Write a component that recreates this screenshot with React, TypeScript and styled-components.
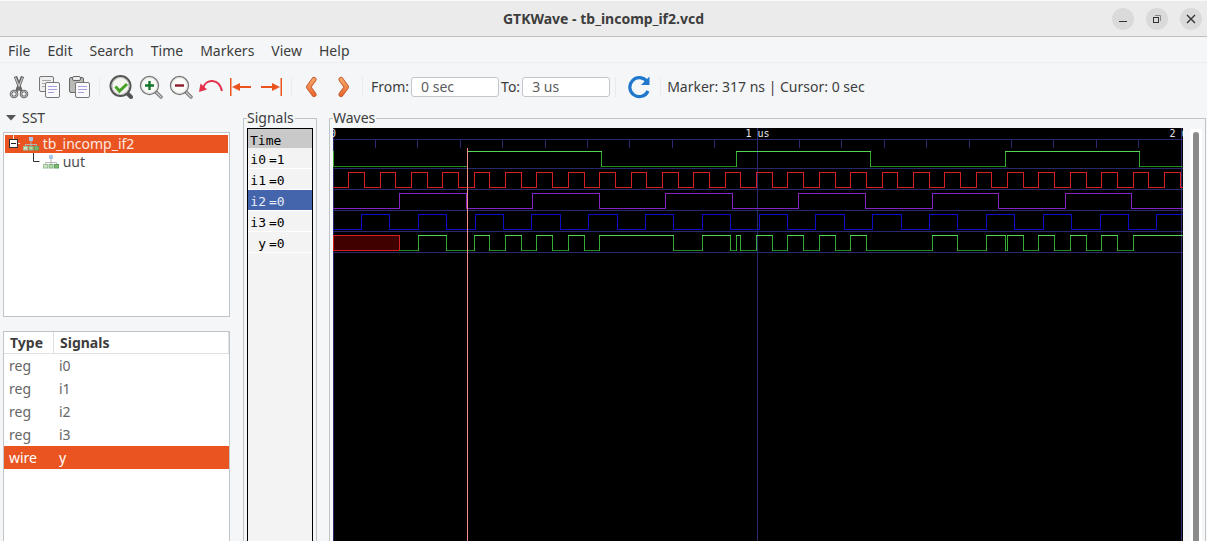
import React from 'react';
import styled, { createGlobalStyle } from 'styled-components';

const Global = createGlobalStyle`
  *, *::before, *::after { box-sizing: border-box; }
  body { margin: 0; background: #f4f6f8; color: #3d3d3d; font: 14px/20px "Noto Sans", sans-serif; }
  button, input { font: inherit; color: inherit; }
`;

const Window = styled.div`
  display: flex;
  flex-direction: column;
  height: 100vh;
  overflow: hidden;
`;

const TitleBar = styled.header`
  display: grid;
  grid-template-columns: 1fr auto 1fr;
  align-items: center;
  height: 37px;
  padding: 0 5px;
  background: #ebebeb;
  border-top: 1px solid #fafafa;
  border-bottom: 1px solid #bdbfc1;
`;

const Title = styled.h1`
  grid-column: 2;
  margin: 0;
  font-size: 14px;
  font-weight: 700;
`;

const WindowButtons = styled.div`
  display: flex;
  justify-content: flex-end;
  gap: 12px;
`;

const RoundButton = styled.button`
  display: flex;
  width: 22px;
  height: 22px;
  padding: 0;
  border: 0;
  border-radius: 50%;
  background: #dadada;
`;

const MenuBar = styled.nav`
  display: flex;
  gap: 1px;
  height: 26px;
  border-bottom: 1px solid #ecedef;
`;

const MenuItem = styled.button`
  padding: 2px 8px 0;
  border: 0;
  background: none;
  line-height: 24px;
`;

const ToolBar = styled.div`
  display: flex;
  align-items: center;
  flex: none;
  height: 45px;
  padding: 3px 4px 0;
`;

const ToolButton = styled.button<{ $width?: number }>`
  display: flex;
  justify-content: center;
  width: ${(p) => p.$width ?? 30}px;
  padding: 0;
  border: 0;
  background: none;
`;

const EdgeButtons = styled.div`
  display: flex;
  gap: 7px;
`;

const Divider = styled.span`
  width: 1px;
  height: 20px;
  margin: 0 6px 0 5px;
  background: #e9ebed;
`;

const Field = styled.label`
  display: flex;
  align-items: center;
  gap: 2px;
  margin-left: 2px;
`;

const TimeInput = styled.input`
  width: 88px;
  height: 20px;
  padding: 0 9px;
  border: 1px solid #c3c7cb;
  border-radius: 3px;
  background: #fff;
  color: #5c5c5c;
`;

const Status = styled.output`
  white-space: pre;
`;

const Main = styled.main`
  display: flex;
  flex: 1;
  min-height: 0;
  padding: 0 1px 0 3px;
`;

const Sidebar = styled.section`
  display: flex;
  flex-direction: column;
  width: 227px;
  margin-right: 13px;
`;

const SstHeader = styled.button`
  display: flex;
  align-items: center;
  gap: 6px;
  padding: 0 0 0 3px;
  margin-bottom: 4px;
  border: 0;
  background: none;
`;

const TreeBox = styled.div`
  height: 185px;
  margin-bottom: 14px;
  padding: 2px 1px;
  border: 1px solid #bfc4c9;
  background: #fff;
`;

const TreeRow = styled.div<{ $selected?: boolean }>`
  display: flex;
  align-items: center;
  height: 18px;
  line-height: 18px;
  color: ${(p) => (p.$selected ? '#fbe9e0' : '#4d4d4d')};
  background: ${(p) => (p.$selected ? '#e95420' : 'none')};
`;

const ListBox = styled.div`
  flex: 1;
  border: 1px solid #bfc4c9;
  border-bottom: 0;
  background: #fff;
`;

const Table = styled.table`
  width: 100%;
  border-collapse: separate;
  border-spacing: 0;
  table-layout: fixed;
`;

const HeadCell = styled.th`
  height: 22px;
  padding: 0 6px;
  border-right: 1px solid #dfe1e2;
  border-bottom: 1px solid #dfe1e2;
  text-align: left;
  line-height: 20px;
  &:first-child { width: 50px; }
`;

const BodyRow = styled.tr<{ $selected?: boolean }>`
  color: ${(p) => (p.$selected ? '#fff' : '#666')};
  background: ${(p) => (p.$selected ? '#e95420' : '#fff')};
`;

const Cell = styled.td`
  height: 23px;
  padding: 0 5px;
`;

const Frame = styled.fieldset<{ $grow?: boolean }>`
  display: flex;
  flex: ${(p) => (p.$grow ? '1' : '0 0 74px')};
  min-width: 0;
  margin: 0 ${(p) => (p.$grow ? 0 : 12)}px 0 0;
  padding: 0 3px;
  border: 1px solid #bfc4c9;
  border-bottom: 0;
`;

const Legend = styled.legend`
  padding: 0 1px 0 0;
  line-height: 20px;
`;

const SignalList = styled.div`
  flex: 1;
  border: 1px solid #000;
  border-bottom: 0;
  background: #f3f3f3;
  color: #000;
  font: 13px/20px "DejaVu Sans Mono", monospace;
`;

const TimeHead = styled.div`
  height: 19px;
  padding: 2px 2px 0;
  background: #c9c9c9;
`;

const SignalRow = styled.div<{ $selected?: boolean }>`
  display: flex;
  gap: 3px;
  height: 21px;
  padding: 2px 2px 0;
  border-bottom: 1px solid #fff;
  color: ${(p) => (p.$selected ? '#e8edf8' : '#000')};
  background: ${(p) => (p.$selected ? '#4464ac' : 'none')};
`;

const SignalName = styled.span`
  width: 16px;
  text-align: right;
`;

const WaveCanvas = styled.svg`
  display: block;
  flex: 1;
  min-width: 0;
  height: 100%;
  margin-right: 7px;
  background: #000;
  font: 10px "DejaVu Sans Mono", monospace;
`;

const ScrollTrack = styled.div`
  width: 12px;
  margin-top: 1px;
  padding: 3px 3px 0;
  background: #fff;
`;

const ScrollThumb = styled.div`
  height: 100%;
  border-radius: 3px 3px 0 0;
  background: #8b8b8b;
`;

const Icon = ({ children }: { children: React.ReactNode }) => (
  <svg width="24" height="24" viewBox="0 0 24 24" fill="none" aria-hidden="true">
    {children}
  </svg>
);

const CutIcon = () => (
  <Icon>
    <path d="M8.500 1.500l5 13M15.500 1.500l-5 13" stroke="#5c5c5c" strokeWidth="3.400" />
    <path d="M8.500 2.500l4.500 11M15.500 2.500l-4.500 11" stroke="#c4c4c4" strokeWidth="1.300" />
    <path d="M12 12l-3 5M12 12l3 5" stroke="#6a6a6a" strokeWidth="3" />
    <circle cx="7" cy="19" r="3" stroke="#6a6a6a" strokeWidth="2.600" />
    <circle cx="17" cy="19" r="3" stroke="#6a6a6a" strokeWidth="2.600" />
    <circle cx="7" cy="19" r="3" stroke="#b5b5b5" strokeWidth="1" />
    <circle cx="17" cy="19" r="3" stroke="#b5b5b5" strokeWidth="1" />
  </Icon>
);

const FrontSheet = () => (
  <>
    <rect x="8.500" y="7.500" width="14" height="15" rx="1.500" fill="#fafafa" stroke="#777" />
    <path d="M11 11.500h9M11 14.500h9M11 17.500h6" stroke="#a6a0e0" />
  </>
);

const CopyIcon = () => (
  <Icon>
    <rect x="2.500" y="1.500" width="14" height="15" rx="1.500" fill="#eee" stroke="#777" />
    <path d="M5 5.500h9M5 8.500h9M5 11.500h5" stroke="#aaa" />
    <FrontSheet />
  </Icon>
);

const PasteIcon = () => (
  <Icon>
    <rect x="2.500" y="2.500" width="14" height="15" rx="1.500" fill="#b9b9b5" stroke="#666" />
    <rect x="5.500" y="1.500" width="8" height="4" rx="1.500" fill="#eee" stroke="#666" />
    <FrontSheet />
  </Icon>
);

const FitIcon = () => (
  <Icon>
    <path d="M18 18l4 4" stroke="#555" strokeWidth="4" strokeLinecap="round" />
    <circle cx="11.500" cy="11" r="10" fill="#f4f5ef" stroke="#555" strokeWidth="2" />
    <circle cx="11.500" cy="11" r="8.500" stroke="#bbb" />
    <path d="M6.500 11.500l4 4.500 7.500-7" stroke="#46a326" strokeWidth="3" />
  </Icon>
);

const ZoomIcon = ({ plus }: { plus?: boolean }) => (
  <Icon>
    <path d="M17 17l5 5" stroke="#777" strokeWidth="3.400" strokeLinecap="round" />
    <path d="M17 17l5 5" stroke="#d0d0d0" strokeWidth="1.200" strokeLinecap="round" />
    <circle cx="10.500" cy="10.500" r="9" fill="#fafaf6" stroke="#777" strokeWidth="1.400" />
    <circle cx="10.500" cy="10.500" r="7.800" stroke="#ddd" />
    <path d={plus ? 'M6 10.500h9M10.500 6v9' : 'M6 10.500h9'} stroke={plus ? '#15752a' : '#8f1c2c'} strokeWidth="2.400" />
  </Icon>
);

const UndoIcon = () => (
  <Icon>
    <path d="M4 13C7 3.500 20 3 23 16" stroke="#e5304b" strokeWidth="2" />
    <path d="M0 17l1.500-8.500 6.500 6z" fill="#e5304b" />
  </Icon>
);

const EdgeIcon = ({ right }: { right?: boolean }) => (
  <Icon>
    <g transform={right ? 'matrix(-1 0 0 1 24 0)' : undefined} fill="#e95420">
      <path d="M1 3h1.500v18H1zM9 11h13v2H9zM3 12l8-4v8z" />
    </g>
  </Icon>
);

const ChevronIcon = ({ right }: { right?: boolean }) => (
  <Icon>
    <defs>
      <linearGradient id="amber" gradientUnits="userSpaceOnUse" x1="0" y1="2" x2="0" y2="22">
        <stop offset="0" stopColor="#f6b070" />
        <stop offset="1" stopColor="#e8622c" />
      </linearGradient>
    </defs>
    <g transform={right ? 'matrix(-1 0 0 1 24 0)' : undefined} strokeLinecap="round" strokeLinejoin="round">
      <path d="M15 4.500L9.500 12l5.500 7.500" stroke="#c8592c" strokeWidth="5" />
      <path d="M15 4.500L9.500 12l5.500 7.500" stroke="url(#amber)" strokeWidth="3.200" />
    </g>
  </Icon>
);

const ReloadIcon = () => (
  <Icon>
    <path d="M20 6.500A9.500 9.500 0 1 0 21 16" stroke="#1f78cc" strokeWidth="3.200" />
    <path d="M22.500 1.500v8.500h-8.500z" fill="#1f78cc" />
  </Icon>
);

const ModuleIcon = () => (
  <svg width="16" height="14" viewBox="0 0 16 14" aria-hidden="true">
    <path d="M8 4v3M2.500 9.500V7.500h11v2M8 7v3" stroke="#b4b4b4" fill="none" />
    <rect x="6" y="0" width="4" height="4" fill="#a9c6ea" />
    <rect x="0.500" y="9.500" width="4" height="3.500" fill="#cfe3c0" stroke="#9cbf9c" />
    <rect x="6" y="9.500" width="4" height="3.500" fill="#b4d8a4" stroke="#86b486" />
    <rect x="11.500" y="9.500" width="4" height="3.500" fill="#7dba70" stroke="#62a062" />
  </svg>
);

// Horizontal scale of the wave view, in pixels per nanosecond.
const SCALE = 0.424;
const END_NS = 3000;
const at = (ns: number) => Math.floor(ns * SCALE) + 0.5;

const clockEdges = (halfPeriod: number) => {
  const edges: number[] = [];
  for (let t = halfPeriod; t < END_NS; t += halfPeriod) edges.push(at(t));
  return edges;
};

const yEdges = [
  85, 113, 141, 156, 172, 188, 203, 219, 235, 251, 266, 340, 369, 397, 403, 407, 423, 439, 454,
  470, 486, 502, 517, 533, 599, 624, 653, 672, 674, 690, 705, 721, 737, 753, 768, 784, 800,
].map((x) => x + 0.5);

interface Signal {
  name: string;
  value: string;
  high: string;
  low: string;
  edges: number[];
  start?: number;
  selected?: boolean;
}

const signals: Signal[] = [
  { name: 'i0', value: '1', high: '#55d455', low: '#1f8a1f', edges: clockEdges(317) },
  { name: 'i1', value: '0', high: '#d42020', low: '#d42020', edges: clockEdges(37) },
  { name: 'i2', value: '0', high: '#8426c4', low: '#8426c4', edges: clockEdges(157), selected: true },
  { name: 'i3', value: '0', high: '#0e0ec4', low: '#0e0ec4', edges: clockEdges(67) },
  { name: 'y', value: '0', high: '#55d455', low: '#1f8a1f', edges: yEdges, start: 66.5 },
];

const Trace = ({ signal, row }: { signal: Signal; row: number }) => {
  const top = 23.5 + row * 21;
  const bottom = top + 15;
  let highs = '';
  let lows = '';
  let walls = '';
  let x = signal.start ?? 0;
  [...signal.edges, at(END_NS)].forEach((edge, i) => {
    if (i % 2) highs += `M${x} ${top}H${edge}`;
    else lows += `M${x} ${bottom}H${edge}`;
    if (edge !== at(END_NS)) walls += `M${edge} ${top}V${bottom}`;
    x = edge;
  });
  return (
    <g fill="none" strokeLinecap="square">
      <path d={lows} stroke={signal.low} />
      <path d={walls} stroke={signal.low === '#1f8a1f' ? '#34ac34' : signal.low} />
      <path d={highs} stroke={signal.high} />
    </g>
  );
};

const Waves = () => (
  <WaveCanvas role="img" aria-label="Waveforms">
    <g stroke="#29296c">
      <path d={`M0 11.5H${at(END_NS)}`} />
      {Array.from({ length: 30 }, (_, i) =>
        i % 10 ? <path key={i} d={`M${at(i * 100)} 12V20`} /> : null,
      )}
      {signals.map((s, i) => (
        <path key={s.name} d={`M0 ${40.5 + i * 21}H${at(END_NS)}`} />
      ))}
    </g>
    {[0, 1000, 2000].map((ns) => (
      <rect key={ns} x={Math.floor(ns * SCALE)} width="1" height="100%" fill="#29296c" />
    ))}
    <g fill="#e6e6e6" textAnchor="middle">
      <text x="0" y="9">0</text>
      <text x={at(1000)} y="9">1 us</text>
      <text x={at(2000)} y="9">2 us</text>
    </g>
    <rect x="0.5" y="107.5" width="66" height="15" fill="#400000" stroke="#d42020" />
    {signals.map((s, i) => (
      <Trace key={s.name} signal={s} row={i} />
    ))}
    <path d="M0.5 23V38" stroke="#34ac34" />
    <rect x={Math.floor(317 * SCALE)} y="20" width="1" height="100%" fill="#f58f88" />
  </WaveCanvas>
);

const menus = ['File', 'Edit', 'Search', 'Time', 'Markers', 'View', 'Help'];

export default function App() {
  return (
    <Window>
      <Global />
      <TitleBar>
        <Title>GTKWave - tb_incomp_if2.vcd</Title>
        <WindowButtons>
          <RoundButton aria-label="Minimize">
            <svg width="22" height="22"><path d="M7 13.5h8" stroke="#333" /></svg>
          </RoundButton>
          <RoundButton aria-label="Restore">
            <svg width="22" height="22" fill="none">
              <path d="M9 7.500h5.500V13" stroke="#888" />
              <rect x="7.500" y="9.500" width="5" height="5" stroke="#333" />
            </svg>
          </RoundButton>
          <RoundButton aria-label="Close">
            <svg width="22" height="22"><path d="M7 7l8 8M15 7l-8 8" stroke="#333" strokeWidth="1.400" /></svg>
          </RoundButton>
        </WindowButtons>
      </TitleBar>
      <MenuBar>
        {menus.map((m) => <MenuItem key={m}>{m}</MenuItem>)}
      </MenuBar>
      <ToolBar>
        <ToolButton aria-label="Cut"><CutIcon /></ToolButton>
        <ToolButton aria-label="Copy"><CopyIcon /></ToolButton>
        <ToolButton aria-label="Paste"><PasteIcon /></ToolButton>
        <Divider />
        <ToolButton aria-label="Zoom fit"><FitIcon /></ToolButton>
        <ToolButton aria-label="Zoom in"><ZoomIcon plus /></ToolButton>
        <ToolButton aria-label="Zoom out"><ZoomIcon /></ToolButton>
        <ToolButton aria-label="Zoom undo"><UndoIcon /></ToolButton>
        <ToolButton aria-label="Zoom to start"><EdgeIcon /></ToolButton>
        <ToolButton aria-label="Zoom to end"><EdgeIcon right /></ToolButton>
        <Divider />
        <EdgeButtons>
          <ToolButton $width={26} aria-label="Previous edge"><ChevronIcon /></ToolButton>
          <ToolButton $width={26} aria-label="Next edge"><ChevronIcon right /></ToolButton>
        </EdgeButtons>
        <Divider />
        <Field>From:<TimeInput defaultValue="0 sec" /></Field>
        <Field>To:<TimeInput defaultValue="3 us" /></Field>
        <Divider />
        <ToolButton $width={33} aria-label="Reload"><ReloadIcon /></ToolButton>
        <Divider />
        <Status>Marker: 317 ns | Cursor: 0 sec</Status>
      </ToolBar>
      <Main>
        <Sidebar>
          <SstHeader aria-expanded="true">
            <svg width="10" height="6"><path d="M0 0h10L5 5.500z" fill="#555" /></svg>
            SST
          </SstHeader>
          <TreeBox role="tree">
            <TreeRow $selected role="treeitem" aria-selected="true">
              <svg width="18" height="18" fill="none" aria-hidden="true">
                <path d="M8.500 0v5M13 8.500h2" stroke="#fbe9e0" />
                <rect x="4.500" y="4.500" width="8" height="8" fill="#fff" stroke="#333" />
                <path d="M6 8.500h5" stroke="#222" />
              </svg>
              <ModuleIcon />
              &nbsp;tb_incomp_if2
            </TreeRow>
            <TreeRow role="treeitem" aria-selected="false">
              <svg width="38" height="18" fill="none" aria-hidden="true">
                <path d="M28.500 0v8.500h6" stroke="#333" />
              </svg>
              <ModuleIcon />
              &nbsp;uut
            </TreeRow>
          </TreeBox>
          <ListBox>
            <Table>
              <thead>
                <tr><HeadCell>Type</HeadCell><HeadCell>Signals</HeadCell></tr>
              </thead>
              <tbody>
                {signals.map((s) => (
                  <BodyRow key={s.name} $selected={s.name === 'y'}>
                    <Cell>{s.name === 'y' ? 'wire' : 'reg'}</Cell>
                    <Cell>{s.name}</Cell>
                  </BodyRow>
                ))}
              </tbody>
            </Table>
          </ListBox>
        </Sidebar>
        <Frame>
          <Legend>Signals</Legend>
          <SignalList>
            <TimeHead>Time</TimeHead>
            {signals.map((s) => (
              <SignalRow key={s.name} $selected={s.selected}>
                <SignalName>{s.name}</SignalName>
                <span>={s.value}</span>
              </SignalRow>
            ))}
          </SignalList>
        </Frame>
        <Frame $grow>
          <Legend>Waves</Legend>
          <Waves />
          <ScrollTrack><ScrollThumb /></ScrollTrack>
        </Frame>
      </Main>
    </Window>
  );
}
